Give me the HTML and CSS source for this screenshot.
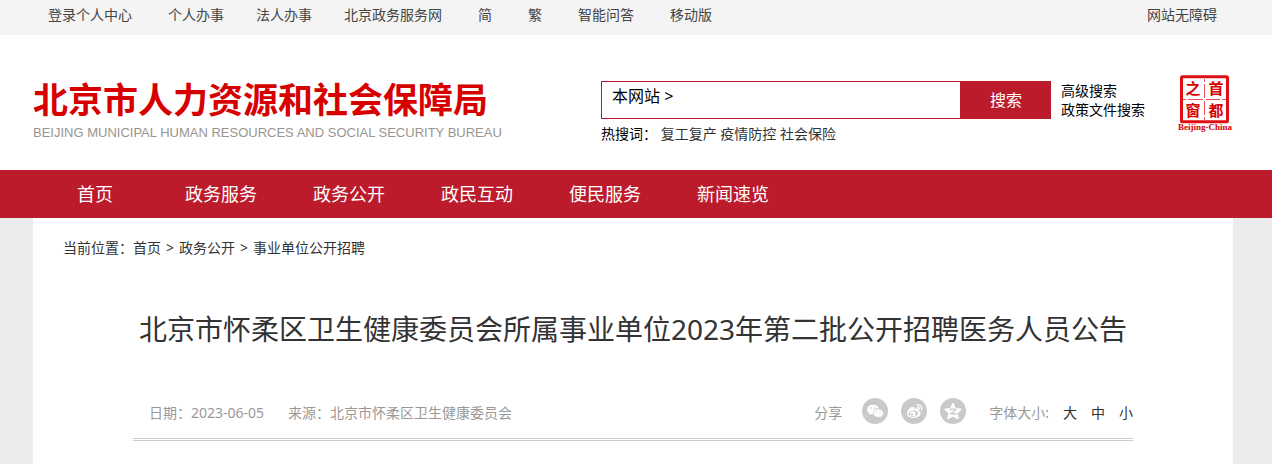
FILE: index.html
```
<!DOCTYPE html>
<html lang="zh-CN">
<head>
<meta charset="UTF-8">
<meta name="viewport" content="width=device-width,initial-scale=1">
<title>北京市怀柔区卫生健康委员会所属事业单位2023年第二批公开招聘医务人员公告</title>
<link rel="stylesheet" href="styles.css">
</head>
<body>

<div class="topbar">
	<div class="wrap topbar-inner">
		<div class="top-links">
			<a href="#">登录个人中心</a>
			<div class="top-group">
				<a href="#">个人办事</a>
				<a href="#">法人办事</a>
				<a href="#">北京政务服务网</a>
			</div>
			<a href="#">简</a>
			<a href="#">繁</a>
			<a href="#">智能问答</a>
			<a href="#">移动版</a>
		</div>
		<a href="#">网站无障碍</a>
	</div>
</div>

<header class="wrap header">
	<a class="logo" href="#">
		<span class="logo-cn">北京市人力资源和社会保障局</span>
		<span class="logo-en">BEIJING MUNICIPAL HUMAN RESOURCES AND SOCIAL SECURITY BUREAU</span>
	</a>
	<div class="search">
		<form class="search-form">
			<div class="search-box">
				<button class="scope" type="button">本网站 &gt;</button>
				<input type="text" aria-label="搜索内容">
			</div>
			<button class="search-btn" type="submit">搜索</button>
		</form>
		<div class="hot">热搜词： <a href="#">复工复产</a> <a href="#">疫情防控</a> <a href="#">社会保险</a></div>
	</div>
	<div class="search-more">
		<a href="#">高级搜索</a>
		<a href="#">政策文件搜索</a>
	</div>
	<a class="seal" href="#" aria-label="首都之窗">
		<svg width="56" height="58" viewBox="0 0 56 58">
			<rect x="4.5" y="1.7" width="46" height="45" rx="1" fill="none" stroke="#db0f14" stroke-width="3"/>
			<path d="M27.5 4v3M27.5 9v14M27.5 26v14M27.5 42v4M6 24.5h3M11 24.5h15M29 24.5h14M45 24.5h4" fill="none" stroke="#e4555a"/>
			<g class="seal-cn">
				<text x="16" y="19">之</text>
				<text x="39" y="19">首</text>
				<text x="16" y="41">窗</text>
				<text x="39" y="41">都</text>
			</g>
			<text class="seal-en" x="28" y="55">Beijing-China</text>
		</svg>
	</a>
</header>

<nav class="nav">
	<div class="wrap nav-inner">
		<a class="home" href="#">首页</a>
		<a href="#">政务服务</a>
		<a href="#">政务公开</a>
		<a href="#">政民互动</a>
		<a href="#">便民服务</a>
		<a href="#">新闻速览</a>
	</div>
</nav>

<main class="main">
	<div class="wrap content">
		<div class="crumbs">当前位置：<a href="#">首页</a><span>&gt;</span><a href="#">政务公开</a><span>&gt;</span><a href="#">事业单位公开招聘</a></div>

		<article class="article">
			<h1>北京市怀柔区卫生健康委员会所属事业单位2023年第二批公开招聘医务人员公告</h1>
			<div class="meta">
				<div class="source">
					<span>日期：2023-06-05</span>
					<span>来源：北京市怀柔区卫生健康委员会</span>
				</div>
				<div class="share">
					<span>分享</span>
					<div class="share-icons">
						<a href="#" aria-label="微信">
							<svg width="26" height="26" viewBox="0 0 26 26">
								<circle cx="13" cy="13" r="13" fill="#c9c9c9"/>
								<path d="M11 6.7c-3.3 0-5.8 2.1-5.8 4.8 0 1.6.8 2.9 2.1 3.8l-.6 1.8 2.2-1.1c.8.2 1.5.4 2.5.3-.8-3.3 2-6 5.4-6-.6-2.1-3-3.6-5.8-3.6z" fill="#fff"/>
								<path d="M16.3 11.1c-2.8 0-4.9 1.8-4.9 4.1s2.1 4.1 4.9 4.1c.7 0 1.3-.1 1.9-.3l1.8 1-.5-1.6c1.2-.8 1.9-1.9 1.9-3.2 0-2.3-2.3-4.1-5.1-4.1z" fill="#fff" stroke="#c9c9c9" stroke-width=".5"/>
								<g fill="#c9c9c9"><circle cx="9" cy="10" r=".8"/><circle cx="12.8" cy="10" r=".8"/><circle cx="14.7" cy="14.1" r=".6"/><circle cx="18" cy="14.1" r=".6"/></g>
							</svg>
						</a>
						<a href="#" aria-label="微博">
							<svg width="26" height="26" viewBox="0 0 26 26">
								<circle cx="13" cy="13" r="13" fill="#c9c9c9"/>
								<path d="M11.5 8.8c-1.5 0-5.6 3.4-5.6 6.7 0 2.7 3 4.4 6.5 4.4 4.4 0 7.2-2.4 7.2-4.6 0-1.3-1-2-2.1-2.4.5-1.3.2-2.1-.6-2.4-1-.4-2.3 0-3.5.5.3-1.1.2-2.2-1.9-2.2z" fill="#fff"/>
								<ellipse cx="12.3" cy="15.6" rx="4.9" ry="3.2" fill="#c9c9c9" transform="rotate(-8 12.3 15.6)"/>
								<ellipse cx="11.8" cy="15.8" rx="3" ry="2.5" fill="#fff"/>
								<circle cx="11" cy="16.3" r="1.1" fill="#c9c9c9"/>
								<path d="M15.9 6.9c3.3-.7 5.5 2 4.6 5M16.3 9.1c1.6-.3 2.5.8 2.1 2.3" fill="none" stroke="#fff" stroke-width="1.2" stroke-linecap="round"/>
							</svg>
						</a>
						<a href="#" aria-label="QQ空间">
							<svg width="26" height="26" viewBox="0 0 26 26">
								<circle cx="13" cy="13" r="13" fill="#c9c9c9"/>
								<path d="M13 5l2.5 5.4 6 .8-4.4 4 1.2 5.8L13 18.1 7.700 21l1.200-5.800-4.400-4 6-.8z" fill="#fff" stroke="#fff" stroke-linejoin="round"/>
								<path d="M9.6 11.5c2-.4 4.3-.4 6.5 0l-5.3 4.2c2 .4 4.1.4 6.2-.1" fill="none" stroke="#c9c9c9" stroke-width="1.3"/>
							</svg>
						</a>
					</div>
					<div class="font-size">
						<span>字体大小:</span>
						<button type="button">大</button>
						<button type="button">中</button>
						<button type="button">小</button>
					</div>
				</div>
			</div>
		</article>
	</div>
</main>

</body>
</html>
```

FILE: styles.css
```
* {
	box-sizing: border-box;
}
body {
	margin: 0;
	background: #fff;
	color: #333;
	font: 14px/20px "Noto Sans", "Noto Sans CJK SC", sans-serif;
}
a {
	color: inherit;
	text-decoration: none;
}
a:hover {
	text-decoration: underline;
}
button,
input {
	margin: 0;
	border: 0;
	padding: 0;
	background: none;
	color: inherit;
	font: inherit;
}
button {
	cursor: pointer;
}
.wrap {
	max-width: 1200px;
	margin: 0 39px 0 33px;
}

/* top bar */
.topbar {
	height: 35px;
	background: #f4f4f4;
	color: #444;
	line-height: 30px;
}
.topbar-inner {
	display: flex;
	justify-content: space-between;
	padding: 0 16px 0 15px;
}
.top-links {
	display: flex;
	gap: 36px;
}
.top-group {
	display: flex;
	gap: 32px;
}

/* header */
.header {
	display: flex;
	align-items: flex-start;
	height: 135px;
	padding-top: 40px;
}
.logo {
	width: 568px;
	padding-top: 4px;
	white-space: nowrap;
}
.logo-cn,
.logo-en {
	display: block;
}
.logo-cn {
	color: #d70000;
	font-size: 35px;
	font-weight: 700;
	line-height: 42px;
}
.logo-en {
	color: #98958f;
	font-family: "Liberation Sans", sans-serif;
	font-size: 13px;
	line-height: 24px;
}
.search {
	flex: 1;
	padding-top: 6px;
	color: #000;
}
.search-form {
	display: flex;
	height: 38px;
}
.search-box {
	display: flex;
	flex: 1;
	align-items: flex-start;
	border: 1px solid #bc1b2b;
	padding: 0 10px;
	font-size: 16px;
	line-height: 28px;
}
.search-box input {
	flex: 1;
	min-width: 0;
	height: 36px;
	padding-left: 8px;
	outline: 0;
}
.search-btn {
	width: 90px;
	background: #bc1b2b;
	color: #fff;
	font-size: 16px;
}
.hot {
	padding-top: 5px;
}
.hot a {
	color: #333;
}
.search-more {
	display: flex;
	flex-direction: column;
	width: 126px;
	padding: 6px 0 0 10px;
	color: #000;
	line-height: 19px;
}
.seal {
	width: 56px;
}
.seal svg {
	display: block;
}
.seal-cn,
.seal-en {
	fill: #d70000;
	font-weight: 700;
	text-anchor: middle;
}
.seal-cn {
	font-family: "Noto Sans CJK SC", sans-serif;
	font-size: 15px;
}
.seal-en {
	font-family: "Liberation Serif", serif;
	font-size: 9px;
}

/* main menu */
.nav {
	background: #bc1b2b;
	color: #fff;
}
.nav-inner {
	display: flex;
	font-size: 18px;
	line-height: 48px;
}
.nav-inner a {
	padding: 0 28px;
}
.nav-inner .home {
	padding: 0 44px;
}

/* article */
.main {
	background: #ececec;
}
.content {
	min-height: 246px;
	padding-top: 20px;
	background: #fff;
}
.crumbs {
	padding: 0 30px;
}
.crumbs span {
	margin: 0 5px;
}
.article {
	margin: 50px 100px 0;
	border-bottom: 3px double #ccc;
}
h1 {
	margin: 0;
	font-size: 28px;
	font-weight: 400;
	line-height: 42px;
	text-align: center;
	white-space: nowrap;
}
.meta {
	display: flex;
	justify-content: space-between;
	padding: 48px 0 10px 16px;
	color: #999;
	line-height: 30px;
}
.source,
.share {
	display: flex;
	align-items: flex-start;
}
.source {
	gap: 24px;
}
.share {
	gap: 20px;
}
.share-icons {
	display: flex;
	gap: 13px;
	padding-right: 3px;
}
.share-icons svg {
	display: block;
}
.font-size {
	display: flex;
	gap: 14px;
}
.font-size button {
	color: #333;
}
```
